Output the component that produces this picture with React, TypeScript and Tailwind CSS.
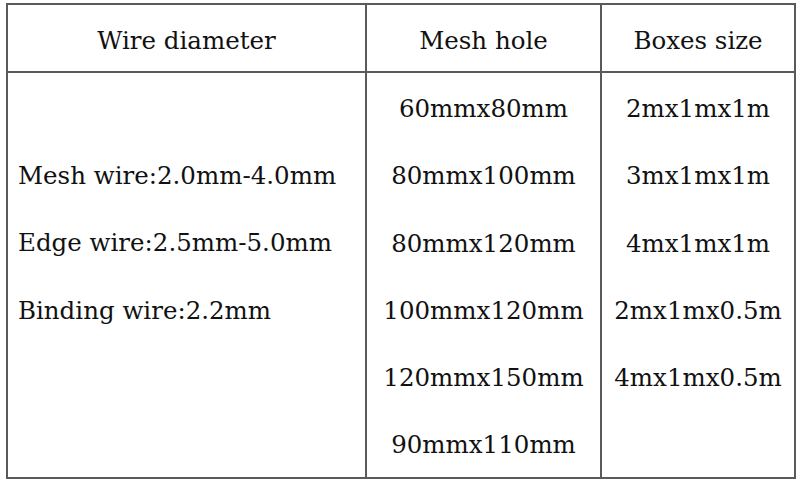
import React from 'react';

const meshHoles = ['60mmx80mm', '80mmx100mm', '80mmx120mm', '100mmx120mm', '120mmx150mm', '90mmx110mm'];
const boxSizes = ['2mx1mx1m', '3mx1mx1m', '4mx1mx1m', '2mx1mx0.5m', '4mx1mx0.5m'];
const wires = ['Mesh wire:2.0mm-4.0mm', 'Edge wire:2.5mm-5.0mm', 'Binding wire:2.2mm'];

const App: React.FC = () => {
  return (
    <div className="w-[800px] h-[481px] bg-white pt-[3px] pl-[6px] text-[24.5px] text-[#111] font-['DejaVu_Serif']">
      <div className="w-[790px] border-2 border-[#5a5a5a] grid grid-cols-[357px_235px_194px]">
        {/* header */}
        <div className="h-[66px] leading-[66px] pt-[3px] text-center">Wire diameter</div>
        <div className="h-[66px] leading-[66px] pt-[3px] text-center border-l-2 border-[#5a5a5a]">Mesh hole</div>
        <div className="h-[66px] leading-[66px] pt-[3px] text-center border-l-2 border-[#5a5a5a]">Boxes size</div>

        {/* body */}
        <div className="h-[406px] border-t-2 border-[#5a5a5a] pl-[10px] pt-[69px] leading-[67.3px] whitespace-nowrap">
          {wires.map((w) => (
            <div key={w}>{w}</div>
          ))}
        </div>
        <div className="h-[406px] border-t-2 border-l-2 border-[#5a5a5a] pt-[2px] text-center leading-[67.3px]">
          {meshHoles.map((m) => (
            <div key={m}>{m}</div>
          ))}
        </div>
        <div className="h-[406px] border-t-2 border-l-2 border-[#5a5a5a] pt-[2px] text-center leading-[67.3px]">
          {boxSizes.map((b) => (
            <div key={b}>{b}</div>
          ))}
        </div>
      </div>
    </div>
  );
};

export default App;
